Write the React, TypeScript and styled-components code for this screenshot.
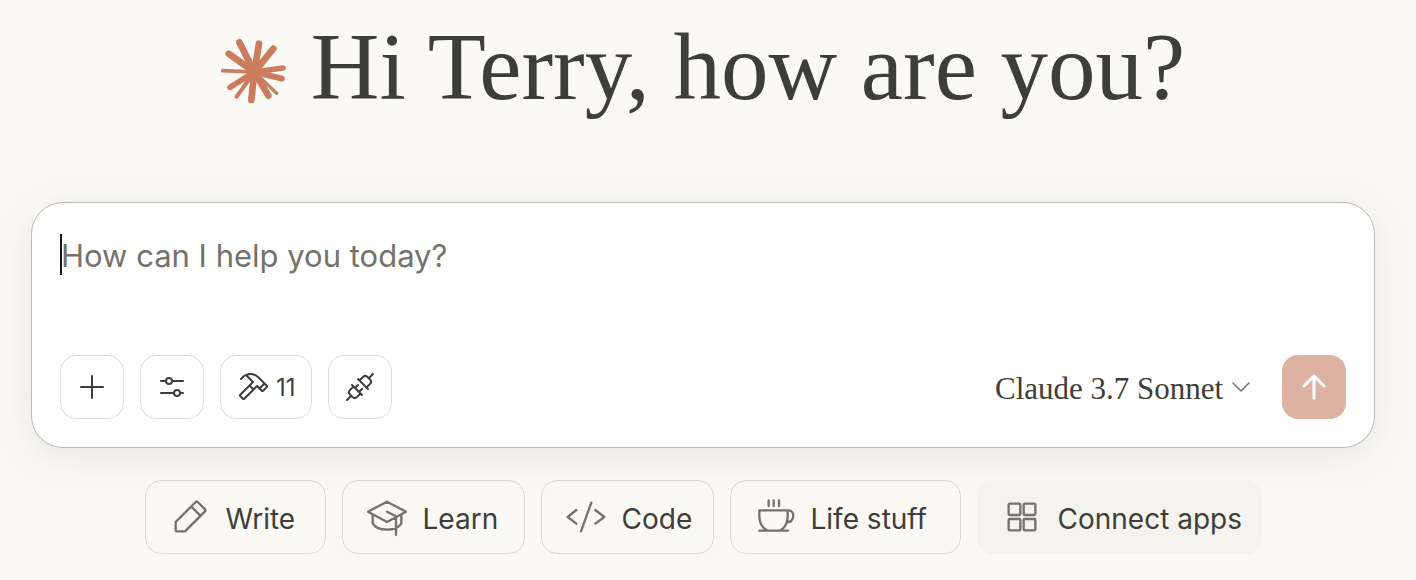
import React, { useState } from "react";
import styled, { createGlobalStyle } from "styled-components";
import { PiHammer, PiPlugs } from "react-icons/pi";

const GlobalStyle = createGlobalStyle`
  * { box-sizing: border-box; }
  body {
    margin: 0;
    background: #faf9f5;
    color: #3d3d3a;
    font-family: Inter, "Liberation Sans", sans-serif;
  }
  button, textarea, select { font: inherit; color: inherit; margin: 0; }
`;

const Page = styled.main`
  padding: 15px 41px 26px 31px;
`;

const Greeting = styled.header`
  display: flex;
  justify-content: center;
  align-items: center;
  gap: 24px;
  margin-bottom: 83px;
`;

const Spark = styled.svg`
  width: 66px;
  height: 66px;
  margin-top: 8px;
  flex: none;
  stroke: #cc7c5e;
  stroke-linecap: round;
`;

const Title = styled.h1`
  margin: 0;
  font-family: "Liberation Serif", serif;
  font-size: 95px;
  line-height: 104px;
  font-weight: 400;
  white-space: nowrap;
`;

const Composer = styled.form`
  padding: 28px;
  border: 1px solid #b9b8b6;
  border-radius: 32px;
  background: #fff;
  box-shadow: 0 8px 40px rgba(0, 0, 0, 0.08);
`;

const Field = styled.div<{ $empty: boolean }>`
  position: relative;
  height: 124px;
  &::before {
    content: "";
    display: ${(p) => (p.$empty ? "block" : "none")};
    position: absolute;
    left: 0;
    top: 3px;
    width: 2px;
    height: 41px;
    background: #141413;
  }
`;

const Prompt = styled.textarea`
  display: block;
  width: 100%;
  height: 100px;
  padding: 0 1px;
  border: 0;
  outline: 0;
  resize: none;
  background: transparent;
  font-size: 31px;
  line-height: 50px;
  &::placeholder { color: #73726c; opacity: 1; }
  &:placeholder-shown { caret-color: transparent; }
`;

const Toolbar = styled.div`
  display: flex;
  align-items: center;
  gap: 16px;
`;

const ToolButton = styled.button`
  display: flex;
  align-items: center;
  justify-content: center;
  gap: 8px;
  min-width: 64px;
  height: 64px;
  padding: 0 15px;
  border: 1px solid #dededc;
  border-radius: 16px;
  background: transparent;
  font-size: 24px;
`;

const SendButton = styled(ToolButton)`
  border: 0;
  background: #ddb2a2;
  color: #fff;
`;

const LineIcon = styled.svg<{ $size: number; $stroke: number }>`
  width: ${(p) => p.$size}px;
  height: ${(p) => p.$size}px;
  flex: none;
  fill: none;
  stroke: currentColor;
  stroke-width: ${(p) => p.$stroke};
  stroke-linecap: round;
  stroke-linejoin: round;
`;

const ModelPicker = styled.label`
  display: flex;
  align-items: center;
  gap: 8px;
  margin-left: auto;
  margin-right: 16px;
  color: #73726c;
`;

const ModelSelect = styled.select`
  appearance: none;
  padding: 3px 0 0;
  border: 0;
  background: transparent;
  color: #3d3d3a;
  font-family: "Liberation Serif", serif;
  font-size: 31px;
  line-height: 40px;
`;

const Suggestions = styled.nav`
  display: flex;
  flex-wrap: wrap;
  justify-content: center;
  gap: 16px;
  margin-top: 32px;
`;

const Chip = styled.button<{ $width: number; $filled?: boolean }>`
  display: flex;
  align-items: center;
  gap: 16px;
  width: ${(p) => p.$width}px;
  height: 74px;
  padding: 0 0 0 24px;
  border: 1px solid ${(p) => (p.$filled ? "transparent" : "#d9d8d4")};
  border-radius: 16px;
  background: ${(p) => (p.$filled ? "#f4f3ee" : "transparent")};
  font-size: 28px;
  white-space: nowrap;
  svg { color: #73726c; }
`;

const ChipLabel = styled.span`
  padding-top: 3px;
`;

const rays = [
  [85, 50, 20], [144, 54, 20], [187, 69, 20], [216, 127, 17], [213, 159, 18], [197, 203, 10],
  [172, 210, 20], [121, 223, 20], [77, 213, 12], [57, 185, 17], [35, 135, 11], [53, 84, 20],
];

const suggestions = [
  { label: "Write", width: 181, box: "90 81 120 120", d: "M107 156 L167 96 Q170 93 173 96 L195 118 Q198 121 195 124 L135 184 H110 Q107 184 107 181 Z M154 110 L181 137" },
  { label: "Learn", width: 183, box: "81 81 120 120", d: "M84 125 L141 95 L198 125 L141 156 Z M141 125 L168 139 V195 M98 134 V160 C112 185 170 185 184 160 V134" },
  { label: "Code", width: 173, box: "78 81 120 120", d: "M109 120 L83 141 L109 161 M166 120 L193 141 L166 161 M154 98 L123 184" },
  { label: "Life stuff", width: 231, box: "75 81 120 120", d: "M116 91 V108 M131 91 V108 M147 91 V108 M88 121 H173 V139 C173 160 166 172 152 181 M88 121 V139 C88 160 96 172 111 181 M88 182 H174 M173 121 H177 C195 123 195 155 171 157" },
  { label: "Connect apps", width: 285, box: "93 81 120 120", d: "M116 101 h29 q3 0 3 3 v28 q0 3 -3 3 h-29 q-3 0 -3 -3 v-28 q0 -3 3 -3 Z M161 101 h29 q3 0 3 3 v28 q0 3 -3 3 h-29 q-3 0 -3 -3 v-28 q0 -3 3 -3 Z M116 147 h29 q3 0 3 3 v28 q0 3 -3 3 h-29 q-3 0 -3 -3 v-28 q0 -3 3 -3 Z M161 147 h29 q3 0 3 3 v28 q0 3 -3 3 h-29 q-3 0 -3 -3 v-28 q0 -3 3 -3 Z", filled: true },
];

export default function App() {
  const [text, setText] = useState("");
  return (
    <>
      <GlobalStyle />
      <Page>
        <Greeting>
          <Spark viewBox="30 37 198 198" aria-hidden="true">
            {rays.map(([x, y, w]) => (
              <line key={`${x}-${y}`} x1="130" y1="139" x2={x} y2={y} strokeWidth={w} />
            ))}
          </Spark>
          <Title>Hi Terry, how are you?</Title>
        </Greeting>

        <Composer onSubmit={(e) => e.preventDefault()}>
          <Field $empty={text === ""}>
            <Prompt
              aria-label="Message"
              placeholder="How can I help you today?"
              value={text}
              onChange={(e) => setText(e.target.value)}
            />
          </Field>
          <Toolbar>
            <ToolButton type="button" aria-label="Add content">
              <LineIcon viewBox="0 0 32 32" $size={32} $stroke={2}>
                <path d="M16 5V27M5 16H27" />
              </LineIcon>
            </ToolButton>
            <ToolButton type="button" aria-label="Settings">
              <LineIcon viewBox="0 0 32 32" $size={32} $stroke={2}>
                <path d="M5 10H10M16 10H27M5 22H18M24 22H27" />
                <circle cx="13" cy="10" r="3" />
                <circle cx="21" cy="22" r="3" />
              </LineIcon>
            </ToolButton>
            <ToolButton type="button" aria-label="Tools, 11 available">
              <PiHammer size={32} />
              11
            </ToolButton>
            <ToolButton type="button" aria-label="Integrations">
              <PiPlugs size={32} />
            </ToolButton>
            <ModelPicker>
              <ModelSelect aria-label="Model">
                <option>Claude 3.7 Sonnet</option>
              </ModelSelect>
              <LineIcon viewBox="0 0 18 18" $size={18} $stroke={1.5}>
                <path d="M1 5L9 13L17 5" />
              </LineIcon>
            </ModelPicker>
            <SendButton type="submit" aria-label="Send">
              <LineIcon viewBox="0 0 32 32" $size={32} $stroke={3}>
                <path d="M16 5V27M6 15L16 5L26 15" />
              </LineIcon>
            </SendButton>
          </Toolbar>
        </Composer>

        <Suggestions aria-label="Suggestions">
          {suggestions.map((s) => (
            <Chip key={s.label} type="button" $width={s.width} $filled={s.filled}>
              <LineIcon viewBox={s.box} $size={40} $stroke={7} aria-hidden="true">
                <path d={s.d} />
              </LineIcon>
              <ChipLabel>{s.label}</ChipLabel>
            </Chip>
          ))}
        </Suggestions>
      </Page>
    </>
  );
}
